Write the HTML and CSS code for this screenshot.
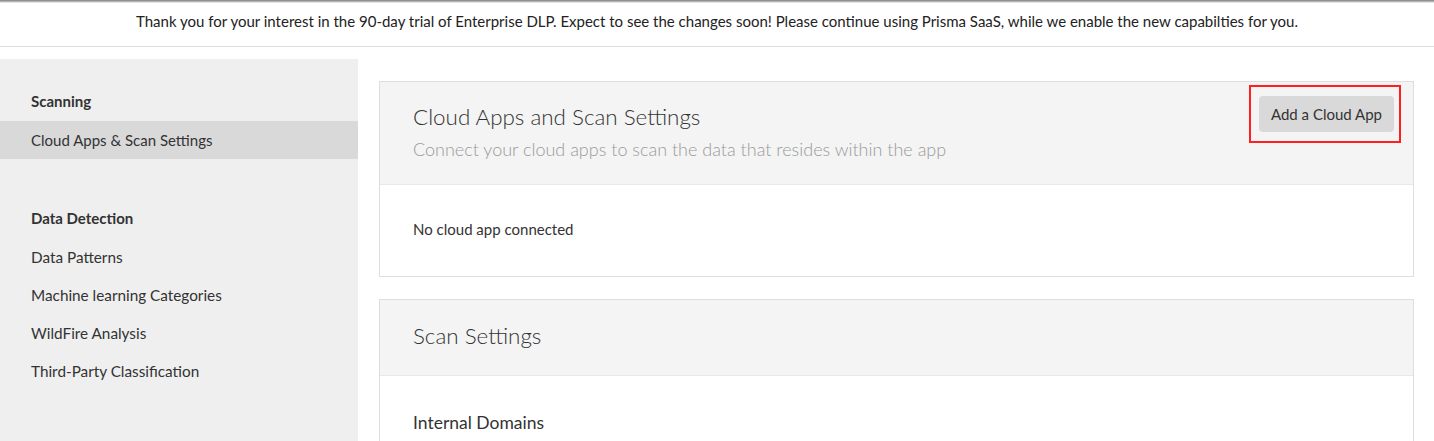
FILE: index.html
```html
<!DOCTYPE html>
<html lang="en">
<head>
<meta charset="utf-8">
<title>Cloud Apps and Scan Settings</title>
<link rel="stylesheet" href="styles.css">
</head>
<body>
<div class="banner">Thank you for your interest in the 90-day trial of Enterprise DLP. Expect to see the changes soon! Please continue using Prisma SaaS, while we enable the new capabilties for you.</div>
<div class="layout">
  <nav class="sidebar">
    <div class="nav-title">Scanning</div>
    <div class="nav-item active">Cloud Apps &amp; Scan Settings</div>
    <div class="nav-title section-gap">Data Detection</div>
    <div class="nav-item">Data Patterns</div>
    <div class="nav-item">Machine learning Categories</div>
    <div class="nav-item">WildFire Analysis</div>
    <div class="nav-item">Third-Party Classification</div>
  </nav>
  <main class="main">
    <section class="card">
      <header class="card-head">
        <div class="head-text">
          <h2 class="card-title">Cloud Apps and Scan Settings</h2>
          <p class="card-sub">Connect your cloud apps to scan the data that resides within the app</p>
        </div>
        <div class="highlight">
          <button class="btn">Add a Cloud App</button>
        </div>
      </header>
      <div class="card-body first-body">No cloud app connected</div>
    </section>
    <section class="card">
      <header class="card-head short">
        <h2 class="card-title">Scan Settings</h2>
      </header>
      <div class="card-body second-body">
        <div class="field-label">Internal Domains</div>
        <div class="field-input"></div>
      </div>
    </section>
  </main>
</div>
</body>
</html>
```

FILE: styles.css
```css
* { box-sizing: border-box; }
html, body { margin: 0; padding: 0; }
body {
  font-family: Lato, "Open Sans", Arial, sans-serif;
  color: #333;
  background: #fff;
  width: 1434px;
  height: 441px;
  overflow: hidden;
}
.banner {
  height: 47px;
  border-bottom: 1px solid #dcdcdc;
  background: linear-gradient(#7d7d7d, #c8c8c8 2px, #fff 3px);
  font-size: 15px;
  color: #222;
  text-align: center;
  line-height: 42px;
}
.layout {
  display: flex;
  align-items: flex-start;
  margin-top: 12px;
}
.sidebar {
  width: 358px;
  flex: none;
  background: #efefef;
  padding-top: 23px;
  height: 400px;
}
.nav-title {
  height: 38px;
  line-height: 38px;
  margin-bottom: 1px;
  padding-left: 31px;
  font-size: 15px;
  font-weight: 700;
  color: #333;
}
.section-gap { margin-top: 40px; }
.nav-item {
  height: 38px;
  line-height: 38px;
  padding-left: 31px;
  font-size: 15.3px;
  color: #333;
}
.nav-item.active { background: #d9d9d9; font-size: 15px; }
.main {
  flex: 1;
  padding: 22px 20px 0 21px;
  display: flex;
  flex-direction: column;
  gap: 22px;
}
.card {
  border: 1px solid #dedede;
  background: #fff;
}
.card-head {
  background: #f4f4f4;
  border-bottom: 1px solid #e8e8e8;
  display: flex;
  justify-content: space-between;
  align-items: flex-start;
  padding: 22px 19px 22px 33px;
  height: 103px;
}
.card-head.short {
  height: 76px;
  padding-top: 23px;
}
.card-title {
  margin: 0;
  font-size: 22.4px;
  line-height: 26px;
  font-weight: 300;
  color: #333;
}
.card-sub {
  margin: 7px 0 0;
  font-size: 18px;
  line-height: 24px;
  font-weight: 300;
  color: #9a9a9a;
}
.highlight {
  position: relative;
  margin-top: -8px;
}
.highlight::after {
  content: "";
  position: absolute;
  left: -10px;
  right: -7px;
  top: -11px;
  bottom: -11px;
  border: 2px solid #ff1f1f;
  pointer-events: none;
}
.btn {
  display: block;
  height: 36px;
  padding: 0 12px;
  border: none;
  border-radius: 4px;
  background: #d9d9d9;
  font-family: inherit;
  font-size: 15px;
  color: #333;
  cursor: pointer;
}
.card-body {
  padding-left: 33px;
  padding-right: 35px;
}
.first-body {
  height: 91px;
  display: flex;
  align-items: center;
  font-size: 15px;
  color: #333;
  padding-bottom: 3px;
}
.second-body {
  padding-top: 37px;
}
.field-label {
  font-size: 17.5px;
  line-height: 20px;
  color: #333;
}
.field-input {
  margin-top: 8px;
  height: 36px;
  border: 1px solid #cfcfcf;
  border-top: 2px solid #c4c4c4;
}
```
